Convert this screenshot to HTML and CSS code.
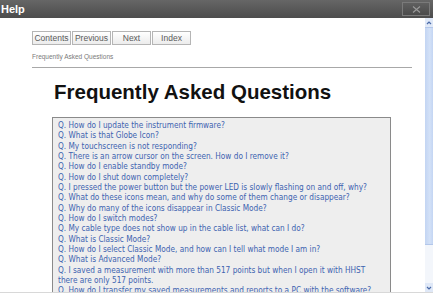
FILE: index.html
```html
<!DOCTYPE html>
<html>
<head>
<meta charset="utf-8">
<link rel="stylesheet" href="styles.css">
</head>
<body>
<div class="window">
  <div class="titlebar">
    <span class="title">Help</span>
    <span class="close"><svg width="11" height="7" viewBox="0 0 11 7"><path d="M2 0.5 L9 6.5 M9 0.5 L2 6.5" stroke="#9a9a9a" stroke-width="1.1" fill="none"/></svg></span>
  </div>
  <div class="main">
    <div class="content">
      <div class="nav">
        <span class="btn">Contents</span>
        <span class="btn">Previous</span>
        <span class="btn">Next</span>
        <span class="btn">Index</span>
      </div>
      <div class="crumb">Frequently Asked Questions</div>
      <div class="rule"></div>
      <h1 class="heading">Frequently Asked Questions</h1>
      <div class="faq">
        <a>Q. How do I update the instrument firmware?</a>
        <a>Q. What is that Globe Icon?</a>
        <a>Q. My touchscreen is not responding?</a>
        <a>Q. There is an arrow cursor on the screen. How do I remove it?</a>
        <a>Q. How do I enable standby mode?</a>
        <a>Q. How do I shut down completely?</a>
        <a>Q. I pressed the power button but the power LED is slowly flashing on and off, why?</a>
        <a>Q. What do these icons mean, and why do some of them change or disappear?</a>
        <a>Q. Why do many of the icons disappear in Classic Mode?</a>
        <a>Q. How do I switch modes?</a>
        <a>Q. My cable type does not show up in the cable list, what can I do?</a>
        <a>Q. What is Classic Mode?</a>
        <a>Q. How do I select Classic Mode, and how can I tell what mode I am in?</a>
        <a>Q. What is Advanced Mode?</a>
        <a>Q. I saved a measurement with more than 517 points but when I open it with HHST there are only 517 points.</a>
        <a>Q. How do I transfer my saved measurements and reports to a PC with the software?</a>
      </div>
    </div>
    <div class="scrollbar">
      <div class="arrow"><svg width="8" height="8" viewBox="0 0 8 8"><path d="M2 5 L4 3 L6 5" stroke="#4a6aa8" stroke-width="1.2" fill="none"/></svg></div>
      <div class="thumb"></div>
      <div class="track"></div>
      <div class="arrow"><svg width="8" height="8" viewBox="0 0 8 8"><path d="M2 3 L4 5 L6 3" stroke="#4a6aa8" stroke-width="1.2" fill="none"/></svg></div>
    </div>
  </div>
</div>
</body>
</html>
```
FILE: styles.css
```css
html, body {
  margin: 0;
  padding: 0;
  background: #ffffff;
}
body {
  width: 448px;
  height: 295px;
  overflow: hidden;
}
.window {
  width: 433px;
  height: 292px;
  display: flex;
  flex-direction: column;
  border-bottom: 1px solid #d8d8d8;
  overflow: hidden;
}
.titlebar {
  height: 18px;
  flex: none;
  background: linear-gradient(#666666, #4c4c4c);
  display: flex;
  align-items: center;
  justify-content: space-between;
}
.title {
  font-family: "Liberation Sans", Arial, sans-serif;
  font-weight: bold;
  font-size: 11px;
  color: #ffffff;
  padding-left: 1px;
}
.close {
  width: 26px;
  height: 12px;
  margin-right: 3px;
  border: 1px solid #7a7a7a;
  background: linear-gradient(#606060, #4a4a4a);
  display: flex;
  align-items: center;
  justify-content: center;
}
.main {
  flex: 1;
  display: flex;
  min-height: 0;
}
.content {
  flex: 1;
  padding: 13px 13px 0 32px;
  min-width: 0;
}
.nav {
  display: flex;
  gap: 1px;
}
.btn {
  box-sizing: border-box;
  width: 39px;
  height: 14px;
  border: 1px solid #b5b5b5;
  background: linear-gradient(#ffffff, #ececec);
  font-family: "Liberation Sans", Arial, sans-serif;
  font-size: 8.5px;
  color: #5a5a5a;
  display: flex;
  align-items: center;
  justify-content: center;
}
.crumb {
  margin-top: 8px;
  font-family: "Liberation Sans", Arial, sans-serif;
  font-size: 6.5px;
  color: #7a7a7a;
  line-height: 8px;
}
.rule {
  margin-top: 6px;
  height: 1px;
  background: #a8a8a8;
}
.heading {
  margin: 12px 0 0 22px;
  font-family: "Liberation Sans", Arial, sans-serif;
  font-weight: bold;
  font-size: 20.5px;
  line-height: 24px;
  color: #111111;
}
.faq {
  margin: 13px 0 0 20px;
  width: 339px;
  box-sizing: border-box;
  border: 1px solid #8a8a8a;
  background: #eeeeee;
  padding: 2px 5px 0 5px;
  font-family: "DejaVu Sans Condensed", "DejaVu Sans", sans-serif;
  font-size: 8.2px;
  line-height: 10.33px;
  color: #3d63b0;
}
.faq a {
  display: block;
}
.scrollbar {
  width: 8px;
  flex: none;
  display: flex;
  flex-direction: column;
  background: #eef3fb;
}
.arrow {
  height: 9px;
  flex: none;
  background: #dfe8f7;
  display: flex;
  align-items: center;
  justify-content: center;
}
.thumb {
  height: 216px;
  flex: none;
  background: linear-gradient(90deg, #c3d5f3, #d3e1f7 60%, #c3d5f3);
  border-top: 1px solid #b3c7ea;
  border-bottom: 1px solid #b3c7ea;
}
.track {
  flex: 1;
  background: #f3f6fb;
}
```
